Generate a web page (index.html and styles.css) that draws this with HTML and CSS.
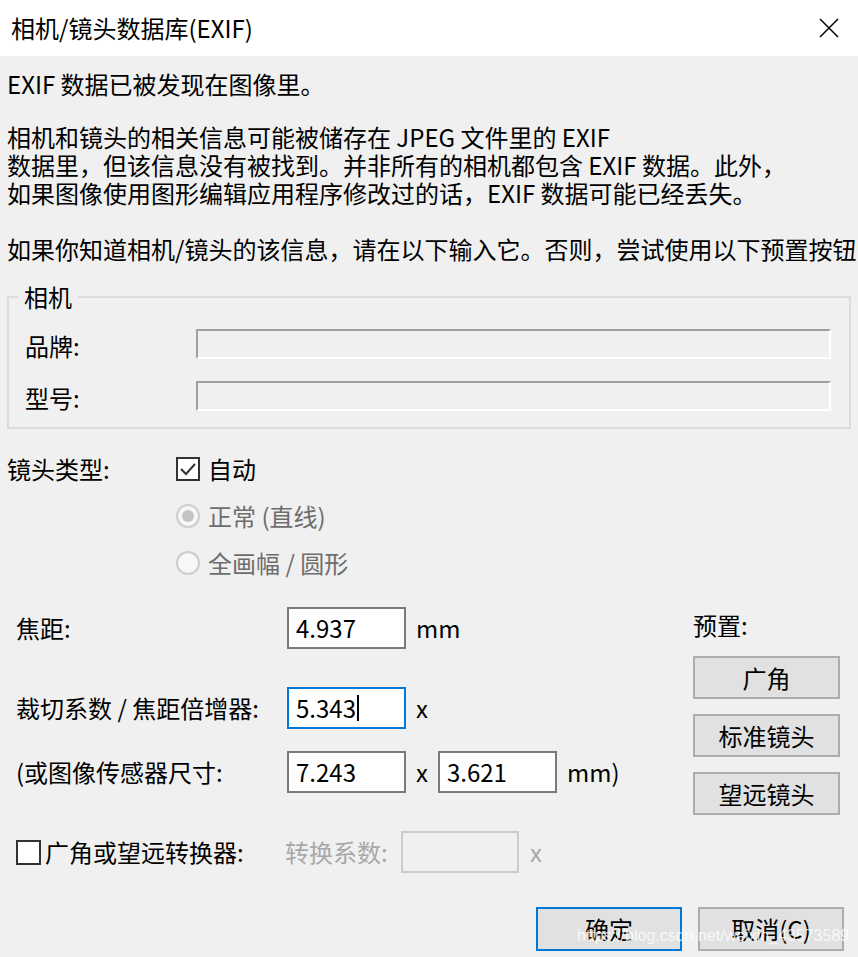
FILE: index.html
```html
<!DOCTYPE html>
<html lang="zh-CN">
<head>
<meta charset="utf-8">
<title>相机/镜头数据库(EXIF)</title>
<link rel="stylesheet" href="styles.css">
</head>
<body>
<div class="dialog">
  <header class="titlebar">
    <span class="title">相机/镜头数据库(EXIF)</span>
    <svg class="close" viewBox="0 0 20 20" aria-label="关闭"><path d="M1 1 L19 19 M19 1 L1 19" stroke="#000" stroke-width="1.5" fill="none"/></svg>
  </header>
  <main class="content">
    <p class="msg msg-first">EXIF 数据已被发现在图像里。</p>
    <p class="msg msg-para">相机和镜头的相关信息可能被储存在 JPEG 文件里的 EXIF<br>数据里，但该信息没有被找到。并非所有的相机都包含 EXIF 数据。此外，<br>如果图像使用图形编辑应用程序修改过的话，EXIF 数据可能已经丢失。</p>
    <p class="msg msg-last">如果你知道相机/镜头的该信息，请在以下输入它。否则，尝试使用以下预置按钮</p>

    <fieldset class="group">
      <legend>相机</legend>
      <div class="grow"><span class="glabel">品牌:</span><div class="sunken"></div></div>
      <div class="grow"><span class="glabel">型号:</span><div class="sunken"></div></div>
    </fieldset>

    <div class="lens">
      <span class="lens-label">镜头类型:</span>
      <div class="opt"><span class="cbox"><svg viewBox="0 0 20 20"><path d="M3 10 L8 15 L17 5" stroke="#333" stroke-width="2" fill="none"/></svg></span><span>自动</span></div>
      <div class="opt opt-disabled"><span class="radio"><span class="dot"></span></span><span>正常 (直线)</span></div>
      <div class="opt opt-disabled"><span class="radio"></span><span>全画幅 / 圆形</span></div>
    </div>

    <div class="focal">
      <div class="fields">
        <div class="frow">
          <span class="flabel">焦距:</span>
          <div class="num">4.937</div>
          <span class="unit">mm</span>
        </div>
        <div class="frow frow-2">
          <span class="flabel">裁切系数 / 焦距倍增器:</span>
          <div class="num num-focus">5.343<span class="caret"></span></div>
          <span class="unit">x</span>
        </div>
        <div class="frow frow-3">
          <span class="flabel">(或图像传感器尺寸:</span>
          <div class="num">7.243</div>
          <span class="unit">x</span>
          <div class="num num-2">3.621</div>
          <span class="unit">mm)</span>
        </div>
      </div>
      <div class="presets">
        <div class="presets-label">预置:</div>
        <div class="btn btn-preset">广角</div>
        <div class="btn btn-preset">标准镜头</div>
        <div class="btn btn-preset">望远镜头</div>
      </div>
    </div>

    <div class="conv">
      <div class="conv-check"><span class="cbox cbox-empty"></span><span>广角或望远转换器:</span></div>
      <span class="conv-label">转换系数:</span>
      <div class="conv-box"></div>
      <span class="conv-x">x</span>
    </div>

    <div class="footer">
      <div class="btn btn-main btn-default">确定</div>
      <div class="btn btn-main">取消(C)</div>
      <span class="watermark">https://blog.csdn.net/weixin_43573589</span>
    </div>
  </main>
</div>
</body>
</html>
```

FILE: styles.css
```css
* { box-sizing: border-box; }
html, body { margin: 0; padding: 0; }
body {
  width: 858px;
  height: 957px;
  overflow: hidden;
  background: #f0f0f0;
  font-family: "Noto Sans CJK SC", "Noto Sans", sans-serif;
  font-size: 24px;
  line-height: 28px;
  color: #000;
}
.titlebar {
  height: 56px;
  background: #fff;
  display: flex;
  align-items: center;
  padding-left: 11px;
}
.title { flex: 1; white-space: nowrap; }
.close { width: 20px; height: 20px; margin-right: 19px; display: block; }

.content { position: relative; }
.msg { margin: 0; padding-left: 7px; white-space: nowrap; }
.msg-first { margin-top: 14px; }
.msg-para { margin-top: 25px; }
.msg-last { margin-top: 28px; }

.group {
  margin: 20px 7px 0;
  border: 2px solid #dcdcdc;
  padding: 18px 18px 16px 16px;
  min-width: 0;
}
.group legend {
  padding: 0 6px;
  margin-left: -7px;
  line-height: 28px;
}
.grow {
  display: flex;
  align-items: center;
  height: 30px;
}
.grow + .grow { margin-top: 22px; }
.glabel { width: 171px; flex: none; padding-top: 4px; }
.sunken {
  flex: 1;
  height: 30px;
  background: #f0f0f0;
  border-top: 2px solid #a0a0a0;
  border-left: 2px solid #a0a0a0;
  border-right: 2px solid #fff;
  border-bottom: 2px solid #fff;
}

.lens {
  display: grid;
  grid-template-columns: 169px auto;
  grid-auto-rows: 28px;
  row-gap: 19px;
  margin: 26px 0 0 7px;
  align-items: center;
}
.lens-label { grid-column: 1; grid-row: 1; }
.opt { grid-column: 2; display: flex; align-items: center; gap: 8px; }
.opt-disabled { color: #6d6d6d; }
.cbox {
  width: 24px;
  height: 24px;
  border: 2px solid #333;
  background: #fff;
  display: block;
  flex: none;
}
.cbox svg { display: block; width: 20px; height: 20px; }
.radio {
  width: 24px;
  height: 24px;
  border: 2px solid #cccccc;
  border-radius: 50%;
  background: #f7f7f7;
  display: flex;
  align-items: center;
  justify-content: center;
  flex: none;
}
.dot { width: 12px; height: 12px; border-radius: 50%; background: #c4c4c4; }

.focal {
  display: flex;
  align-items: flex-start;
  margin-top: 30px;
  padding-left: 16px;
}
.frow { display: flex; align-items: center; height: 42px; }
.frow-2 { margin-top: 38px; }
.frow-3 { margin-top: 22px; }
.flabel { width: 271px; flex: none; white-space: nowrap; }
.num {
  width: 119px;
  height: 42px;
  border: 2px solid #7a7a7a;
  background: #fff;
  padding-left: 7px;
  line-height: 36px;
  flex: none;
  display: flex;
  align-items: center;
}
.num-focus { border-color: #0078d7; }
.caret { display: inline-block; width: 2px; height: 26px; background: #000; margin-left: 1px; }
.unit { margin-left: 10px; }
.num-2 { margin-left: 10px; }

.presets {
  margin-left: auto;
  margin-right: 18px;
  width: 147px;
  padding-top: 4px;
}
.btn {
  background: #e1e1e1;
  border: 2px solid #adadad;
  display: flex;
  align-items: center;
  justify-content: center;
}
.btn-preset { height: 43px; margin-top: 15px; }
.presets-label + .btn-preset { margin-top: 17px; }

.conv {
  display: flex;
  align-items: center;
  height: 42px;
  margin-top: 16px;
  padding-left: 16px;
}
.conv-check { width: 269px; display: flex; align-items: center; gap: 4px; flex: none; }
.cbox-empty { width: 25px; height: 25px; }
.conv-label { width: 116px; color: #a8a8a8; flex: none; }
.conv-box {
  width: 118px;
  height: 42px;
  border: 2px solid #cccccc;
  background: #f0f0f0;
  flex: none;
}
.conv-x { margin-left: 11px; color: #a8a8a8; }

.footer {
  position: relative;
  display: flex;
  justify-content: flex-end;
  gap: 16px;
  margin-top: 34px;
  padding-right: 14px;
}
.btn-main { width: 146px; height: 44px; }
.btn-default { border-color: #0078d7; }
.watermark {
  position: absolute;
  left: 577px;
  top: 19px;
  font-family: "Liberation Sans", Arial, sans-serif;
  font-size: 16px;
  line-height: 20px;
  color: rgba(255, 255, 255, 0.8);
  white-space: nowrap;
}
```
